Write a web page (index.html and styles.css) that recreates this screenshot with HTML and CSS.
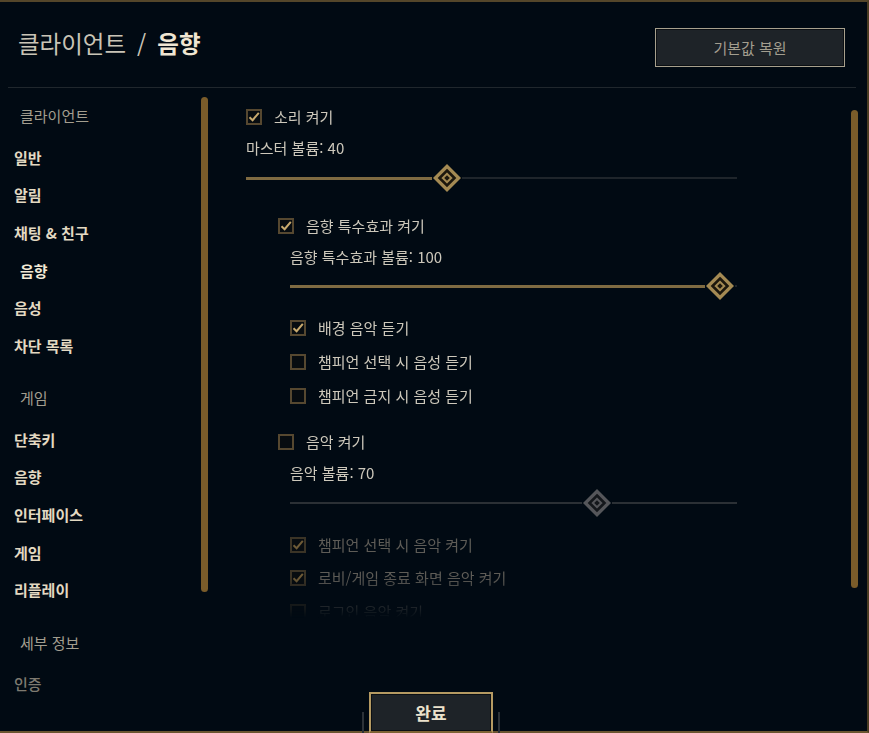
FILE: index.html
```html
<!DOCTYPE html>
<html lang="ko">
<head>
<meta charset="utf-8">
<title>클라이언트 / 음향</title>
<link rel="stylesheet" href="styles.css">
</head>
<body>
<div class="frame">
  <header class="header">
    <h1 class="title"><span class="crumb">클라이언트</span><span class="crumb">/</span><span class="current">음향</span></h1>
    <button class="restore">기본값 복원</button>
  </header>
  <div class="divider"></div>
  <div class="main">
    <aside class="sidebar">
      <nav class="nav">
        <div class="nav-head">클라이언트</div>
        <div class="nav-item">일반</div>
        <div class="nav-item">알림</div>
        <div class="nav-item">채팅 &amp; 친구</div>
        <div class="nav-item active">음향</div>
        <div class="nav-item">음성</div>
        <div class="nav-item">차단 목록</div>
        <div class="nav-head">게임</div>
        <div class="nav-item">단축키</div>
        <div class="nav-item">음향</div>
        <div class="nav-item">인터페이스</div>
        <div class="nav-item">게임</div>
        <div class="nav-item">리플레이</div>
        <div class="nav-head">세부 정보</div>
        <div class="nav-item dim">인증</div>
      </nav>
      <div class="scrollbar side-bar"></div>
    </aside>
    <section class="content">
      <div class="settings">
        <div class="row">
          <span class="box"><svg viewBox="0 0 12 12" width="12" height="12"><path d="M1.5 6.2 L4.6 9.2 L10.8 1.8" fill="none" stroke="#c8aa6e" stroke-width="2"/></svg></span>
          <span>소리 켜기</span>
        </div>
        <div class="label mt11">마스터 볼륨: 40</div>
        <div class="slider mt5 wide">
          <div class="fill" style="width:186px"></div>
          <svg class="thumb" viewBox="0 0 30 30" width="30" height="30"><path d="M15 1 L29 15 L15 29 L1 15Z" fill="#a48a53"/><path d="M15 7.5 L22.5 15 L15 22.5 L7.5 15Z" fill="none" stroke="#1c170d" stroke-width="2.6"/><path d="M15 12.2 L17.8 15 L15 17.8 L12.2 15Z" fill="#1c170d"/></svg>
          <div class="rest"></div>
        </div>

        <div class="group mt23">
          <div class="row">
            <span class="box"><svg viewBox="0 0 12 12" width="12" height="12"><path d="M1.5 6.2 L4.6 9.2 L10.8 1.8" fill="none" stroke="#c8aa6e" stroke-width="2"/></svg></span>
            <span>음향 특수효과 켜기</span>
          </div>
          <div class="sub">
            <div class="label mt11">음향 특수효과 볼륨: 100</div>
            <div class="slider mt4 narrow">
              <div class="fill" style="width:415px"></div>
              <svg class="thumb" viewBox="0 0 30 30" width="30" height="30"><path d="M15 1 L29 15 L15 29 L1 15Z" fill="#a48a53"/><path d="M15 7.5 L22.5 15 L15 22.5 L7.5 15Z" fill="none" stroke="#1c170d" stroke-width="2.6"/><path d="M15 12.2 L17.8 15 L15 17.8 L12.2 15Z" fill="#1c170d"/></svg>
              <div class="rest"></div>
            </div>
            <div class="row mt17">
              <span class="box"><svg viewBox="0 0 12 12" width="12" height="12"><path d="M1.5 6.2 L4.6 9.2 L10.8 1.8" fill="none" stroke="#c8aa6e" stroke-width="2"/></svg></span>
              <span>배경 음악 듣기</span>
            </div>
            <div class="row mt14">
              <span class="box"></span>
              <span>챔피언 선택 시 음성 듣기</span>
            </div>
            <div class="row mt14">
              <span class="box"></span>
              <span>챔피언 금지 시 음성 듣기</span>
            </div>
          </div>
        </div>

        <div class="group mt26">
          <div class="row">
            <span class="box"></span>
            <span>음악 켜기</span>
          </div>
          <div class="sub">
            <div class="label mt11">음악 볼륨: 70</div>
            <div class="slider mt5 narrow off">
              <div class="fill" style="width:292px"></div>
              <svg class="thumb" viewBox="0 0 30 30" width="30" height="30"><path d="M15 1 L29 15 L15 29 L1 15Z" fill="#55565a"/><path d="M15 7.5 L22.5 15 L15 22.5 L7.5 15Z" fill="none" stroke="#14171b" stroke-width="2.6"/><path d="M15 12.2 L17.8 15 L15 17.8 L12.2 15Z" fill="#14171b"/></svg>
              <div class="rest"></div>
            </div>
            <div class="row disabled mt17">
              <span class="box"><svg viewBox="0 0 12 12" width="12" height="12"><path d="M1.5 6.2 L4.6 9.2 L10.8 1.8" fill="none" stroke="#6e5b37" stroke-width="2"/></svg></span>
              <span>챔피언 선택 시 음악 켜기</span>
            </div>
            <div class="row disabled mt13">
              <span class="box"><svg viewBox="0 0 12 12" width="12" height="12"><path d="M1.5 6.2 L4.6 9.2 L10.8 1.8" fill="none" stroke="#6e5b37" stroke-width="2"/></svg></span>
              <span>로비/게임 종료 화면 음악 켜기</span>
            </div>
            <div class="row disabled mt14">
              <span class="box"></span>
              <span>로그인 음악 켜기</span>
            </div>
          </div>
        </div>
      </div>
      <div class="scrollbar content-bar"></div>
    </section>
  </div>
  <footer class="footer">
    <span class="deco"></span>
    <button class="done">완료</button>
    <span class="deco"></span>
  </footer>
</div>
</body>
</html>
```
FILE: styles.css
```css
* { box-sizing: border-box; }
html, body {
  margin: 0;
  padding: 0;
  background: #010a13;
  width: 869px;
  height: 733px;
  overflow: hidden;
  font-family: "Noto Sans CJK KR", "Noto Sans", sans-serif;
}
.frame {
  width: 869px;
  height: 733px;
  display: flex;
  flex-direction: column;
  border-top: 2px solid #54462a;
  border-right: 2px solid #4a3c22;
  border-bottom: 2px solid #6a5530;
  background: #010a13;
}
.header {
  height: 85px;
  flex: none;
  display: flex;
  align-items: flex-start;
  justify-content: space-between;
  padding: 0 22px 0 18px;
}
.title {
  margin: 26px 0 0;
  display: flex;
  gap: 11px;
  font-size: 23.5px;
  line-height: 30px;
  font-weight: 400;
}
.crumb { color: #c9c4b6; }
.current { color: #f0e6d2; font-weight: 700; }
.restore {
  margin-top: 26px;
  width: 190px;
  height: 39px;
  background: #1e2328;
  border: 1px solid #a7a08d;
  box-shadow: inset 0 0 0 1px #0b0f13;
  color: #a39e8f;
  font-family: inherit;
  font-size: 15px;
  padding: 0;
}
.divider {
  height: 1px;
  flex: none;
  margin: 0 11px 0 8px;
  background: #20272d;
}
.main {
  flex: 1;
  display: grid;
  grid-template-columns: 216px 1fr;
  min-height: 0;
}
.sidebar {
  display: flex;
  padding: 9px 8px 0 14px;
}
.nav {
  flex: 1;
  display: flex;
  flex-direction: column;
}
.nav-head {
  height: 38px;
  line-height: 38px;
  padding-left: 6px;
  font-size: 15px;
  color: #a39e8f;
  margin-bottom: 3.5px;
}
.nav-item + .nav-head { margin-top: 14.5px; }
.nav-item {
  height: 37.7px;
  line-height: 37.7px;
  font-size: 15px;
  font-weight: 700;
  color: #e3d9c2;
}
.nav-item.active { padding-left: 6px; color: #f3ead7; }
.nav-item.dim { color: #7e7a70; font-weight: 500; }
.scrollbar {
  width: 7px;
  background: #7a5c2a;
  border-radius: 3.5px;
  flex: none;
}
.side-bar { height: 495px; }
.content {
  display: flex;
  padding-right: 9px;
}
.settings {
  flex: 1;
  height: 530px;
  overflow: hidden;
  padding: 19px 0 0 30px;
  display: flex;
  flex-direction: column;
  font-size: 15px;
  color: #cdc8bb;
  -webkit-mask-image: linear-gradient(to bottom, #000 488px, rgba(0,0,0,0.25) 522px, transparent 530px);
  mask-image: linear-gradient(to bottom, #000 488px, rgba(0,0,0,0.25) 522px, transparent 530px);
}
.content-bar { margin-top: 22px; height: 478px; }
.row {
  display: flex;
  align-items: center;
  gap: 12px;
  height: 20px;
  line-height: 20px;
  flex: none;
}
.box {
  width: 16px;
  height: 16px;
  border: 2px solid #564830;
  background: #070c10;
  display: flex;
  align-items: center;
  justify-content: center;
  flex: none;
}
.label {
  height: 20px;
  line-height: 20px;
  flex: none;
}
.slider {
  display: flex;
  align-items: center;
  height: 30px;
  flex: none;
}
.slider.wide { width: 491px; }
.slider.narrow { width: 447px; }
.fill { height: 3px; background: #7f6b42; flex: none; }
.rest { flex: 1; height: 2px; background: #1f252b; }
.thumb { flex: none; display: block; }
.slider.off .fill { background: #2b3035; height: 2px; }
.slider.off .rest { background: #2b3035; }
.group { display: flex; flex-direction: column; margin-left: 32px; }
.sub { display: flex; flex-direction: column; margin-left: 12px; }
.row.disabled { color: #5e5c57; }
.row.disabled .box { border-color: #3b3426; }
.mt4 { margin-top: 4px; }
.mt5 { margin-top: 5px; }
.mt11 { margin-top: 11px; }
.mt13 { margin-top: 13px; }
.mt14 { margin-top: 14px; }
.mt17 { margin-top: 17px; }
.mt23 { margin-top: 23px; }
.mt26 { margin-top: 26px; }
.footer {
  height: 39px;
  flex: none;
  display: flex;
  justify-content: center;
  align-items: flex-end;
  gap: 5px;
  padding-right: 5px;
}
.deco {
  width: 2px;
  height: 21px;
  background: #2c3238;
  margin-bottom: -2px;
}
.done {
  width: 124px;
  height: 41px;
  margin-bottom: -2px;
  position: relative;
  z-index: 1;
  background: #1e2328;
  border: 2px solid #b59a62;
  border-bottom-color: #7d6233;
  box-shadow: inset 0 0 0 1px #0b0f13;
  color: #ece2cc;
  font-family: inherit;
  font-size: 17px;
  font-weight: 700;
  padding: 0;
}
```
